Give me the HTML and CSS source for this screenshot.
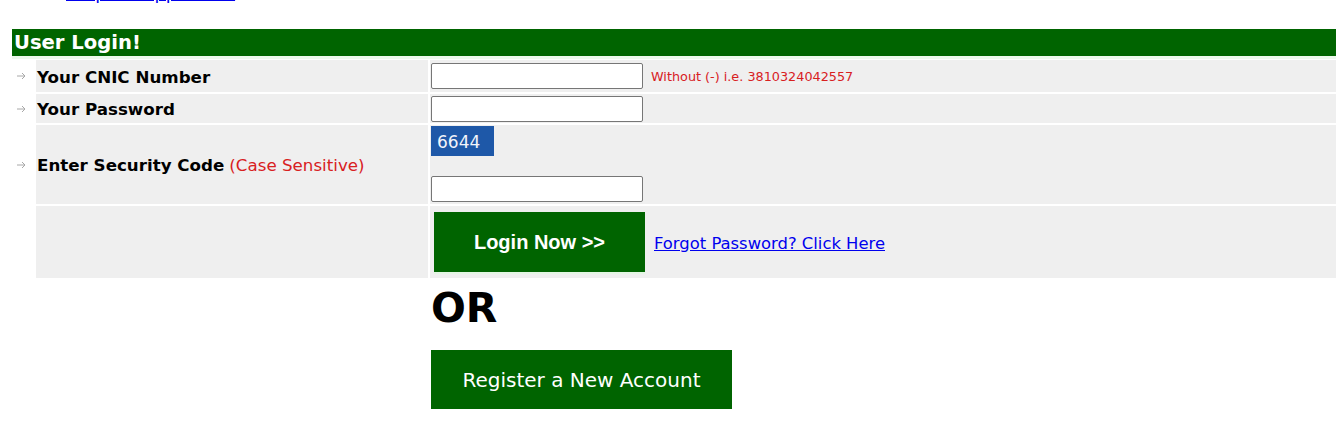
FILE: index.html
```html
<!DOCTYPE html>
<html>
<head>
<meta charset="utf-8">
<title>User Login</title>
<link rel="stylesheet" href="styles.css">
</head>
<body>
<div class="page">
  <div class="toplink"><a href="#">Help for Applicants</a></div>
  <div class="heading">User Login!</div>
  <div class="form">
    <div class="ico"><svg width="10" height="8" viewBox="0 0 10 8"><path d="M0 4h8M5 1l3 3-3 3" fill="none" stroke="#a8a8a8" stroke-width="1"/></svg></div>
    <div class="lbl">Your CNIC Number</div>
    <div class="fld row1"><span class="box"></span><span class="hint">Without (-) i.e. 3810324042557</span></div>

    <div class="ico"><svg width="10" height="8" viewBox="0 0 10 8"><path d="M0 4h8M5 1l3 3-3 3" fill="none" stroke="#a8a8a8" stroke-width="1"/></svg></div>
    <div class="lbl">Your Password</div>
    <div class="fld row2"><span class="box"></span></div>

    <div class="ico"><svg width="10" height="8" viewBox="0 0 10 8"><path d="M0 4h8M5 1l3 3-3 3" fill="none" stroke="#a8a8a8" stroke-width="1"/></svg></div>
    <div class="lbl">Enter Security Code <span class="red">(Case Sensitive)</span></div>
    <div class="fld row3"><span class="captcha">6644</span><span class="box"></span></div>

    <div class="ico"></div>
    <div class="lbl"></div>
    <div class="fld row4"><span class="login">Login Now &gt;&gt;</span><a href="#" class="forgot">Forgot Password? Click Here</a></div>
  </div>
  <div class="after">
    <div class="or">OR</div>
    <div class="register">Register a New Account</div>
  </div>
</div>
</body>
</html>
```
FILE: styles.css
```css
html, body { margin: 0; padding: 0; background: #fff; }
body { font-family: "DejaVu Sans", Verdana, sans-serif; overflow: hidden; }
.page { padding-left: 12px; }
.toplink { height: 45px; margin-top: -16px; padding-left: 54px; font-size: 17.8px; line-height: 18px; }
.toplink a { color: #0000ee; }
.heading {
  background: #006400; color: #fff; font-weight: bold; font-size: 19.6px;
  height: 27px; line-height: 28px; padding-left: 2px;
  border-bottom: 3px solid #ecf9ec;
}
.form {
  display: grid;
  grid-template-columns: 22px 392px 1fr;
  grid-template-rows: 32px 29px 79px 72px;
  gap: 2px;
  margin-top: 1px;
}
.ico { display: flex; align-items: center; padding-left: 5px; }
.lbl {
  background: #efefef; font-weight: bold; font-size: 16.7px; color: #000;
  display: flex; align-items: center; padding-left: 1px; padding-top: 1px;
}
.red { color: #d8201e; font-weight: normal; margin-left: 5px; }
.fld { background: #efefef; display: flex; }
.box {
  display: block; width: 210px; height: 24px; background: #fff;
  border: 1px solid #767676; border-radius: 2px; margin-left: 1px;
}
.row1 { align-items: center; }
.hint { color: #d8201e; font-size: 12.8px; margin-left: 8px; }
.row2 { align-items: center; }
.row3 { flex-direction: column; align-items: flex-start; justify-content: space-between; padding: 1px 0 2px; }
.captcha {
  display: block; width: 57px; height: 30px; background: #1e58a8; color: #f2f4fa;
  font-size: 17px; line-height: 32px; padding-left: 6px; margin-left: 1px;
  font-family: "DejaVu Sans", sans-serif;
}
.row4 { align-items: center; }
.login {
  display: flex; align-items: center; justify-content: center;
  width: 211px; height: 60px; background: #006400; color: #fff;
  font-family: "Liberation Sans", Arial, sans-serif; font-weight: bold; font-size: 20px;
  margin-left: 4px; box-shadow: 0 2px 0 #e4f6e4;
}
.forgot { color: #0000ee; font-size: 16.4px; margin-left: 9px; margin-top: 2px; }
.after { padding-left: 419px; }
.or { font-size: 41px; font-weight: bold; line-height: 48px; margin-top: 6px; color: #000; }
.register {
  display: flex; align-items: center; justify-content: center;
  width: 301px; height: 59px; background: #006400; color: #fff;
  font-size: 20px; margin-top: 18px;
}
```
